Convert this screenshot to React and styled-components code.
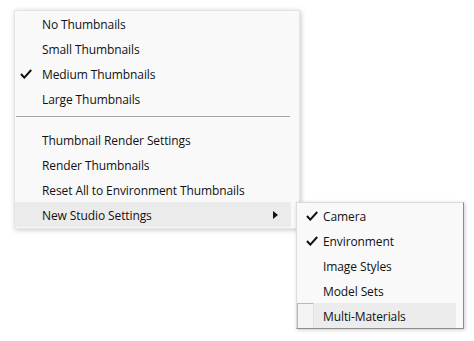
import React from "react";
import styled, { createGlobalStyle } from "styled-components";

const GlobalStyle = createGlobalStyle`
  html, body {
    margin: 0;
    padding: 0;
    background: #ffffff;
  }
  body {
    font-family: "Open Sans", "Noto Sans", sans-serif;
    font-size: 12px;
    color: #111111;
  }
`;

const Page = styled.div`
  width: 474px;
  height: 341px;
  padding: 10px 0 0 14px;
  box-sizing: border-box;
`;

const Menu = styled.div`
  position: relative;
  width: 286px;
  box-sizing: border-box;
  background: #f9f9f9;
  border: 1px solid #e4e4e4;
  box-shadow: 1px 1px 5px rgba(0, 0, 0, 0.22);
  display: flex;
  flex-direction: column;
  padding-bottom: 1px;
`;

const Item = styled.div`
  position: relative;
  height: 25px;
  display: flex;
  align-items: center;
  padding-left: ${(p) => p.$gutter}px;
  padding-right: 8px;
  margin-right: ${(p) => (p.$inset ? 8 : 0)}px;
  background: ${(p) => (p.$active ? "#ebebeb" : "transparent")};
  white-space: nowrap;
`;

const Label = styled.span`
  flex: 1;
  padding-top: 2px;
  letter-spacing: -0.1px;
`;

const CheckSlot = styled.span`
  position: absolute;
  left: ${(p) => p.$left}px;
  top: 8px;
  width: 12px;
  height: 10px;
  display: flex;
`;

const Separator = styled.div`
  height: 1px;
  background: #a6a6a6;
  margin: 5px 9px 10px 1px;
`;

const Arrow = styled.span`
  width: 0;
  height: 0;
  margin-right: 5px;
  border-top: 4px solid transparent;
  border-bottom: 4px solid transparent;
  border-left: 5px solid #111111;
`;

const SubMenu = styled.div`
  position: absolute;
  left: 281px;
  top: 0;
  width: 168px;
  box-sizing: border-box;
  background: #f9f9f9;
  border: 1px solid #dcdcdc;
  border-right-color: #8c8c8c;
  border-bottom-color: #8c8c8c;
  box-shadow: 1px 1px 4px rgba(0, 0, 0, 0.2);
  display: flex;
  flex-direction: column;
  z-index: 2;
`;

const SubItem = styled.div`
  position: relative;
  height: 25px;
  display: flex;
  align-items: center;
  padding-left: 26px;
  margin-right: 7px;
  white-space: nowrap;
  background: ${(p) => (p.$active ? "#ececec" : "transparent")};
`;

const Box = styled.span`
  position: absolute;
  left: 0;
  top: 0;
  width: 17px;
  height: 25px;
  box-sizing: border-box;
  background: #f4f4f4;
  border-top: 1px solid #b8b8b8;
  border-left: 1px solid #b8b8b8;
  border-right: 1px solid #e0e0e0;
`;

const Check = () => (
  <svg width="12" height="10" viewBox="0 0 12 10">
    <path
      d="M1 5 L4.3 8.6 L11.2 1"
      fill="none"
      stroke="#111111"
      strokeWidth="2"
      strokeLinejoin="miter"
    />
  </svg>
);

const mainItems = [
  { label: "No Thumbnails" },
  { label: "Small Thumbnails" },
  { label: "Medium Thumbnails", checked: true },
  { label: "Large Thumbnails" },
];

const renderItems = [
  "Thumbnail Render Settings",
  "Render Thumbnails",
  "Reset All to Environment Thumbnails",
];

const studioItems = [
  { label: "Camera", checked: true },
  { label: "Environment", checked: true },
  { label: "Image Styles" },
  { label: "Model Sets" },
  { label: "Multi-Materials", active: true },
];

export default function App() {
  return (
    <>
      <GlobalStyle />
      <Page>
        <Menu>
          {mainItems.map((it) => (
            <Item key={it.label} $gutter={27}>
              {it.checked && (
                <CheckSlot $left={5}>
                  <Check />
                </CheckSlot>
              )}
              <Label>{it.label}</Label>
            </Item>
          ))}
          <Separator />
          {renderItems.map((label) => (
            <Item key={label} $gutter={27}>
              <Label>{label}</Label>
            </Item>
          ))}
          <Item $gutter={27} $active $inset>
            <Label>New Studio Settings</Label>
            <Arrow />
            <SubMenu>
              {studioItems.map((it) => (
                <SubItem key={it.label} $active={it.active}>
                  {it.checked && (
                    <CheckSlot $left={9}>
                      <Check />
                    </CheckSlot>
                  )}
                  {it.active && <Box />}
                  <Label>{it.label}</Label>
                </SubItem>
              ))}
            </SubMenu>
          </Item>
        </Menu>
      </Page>
    </>
  );
}
